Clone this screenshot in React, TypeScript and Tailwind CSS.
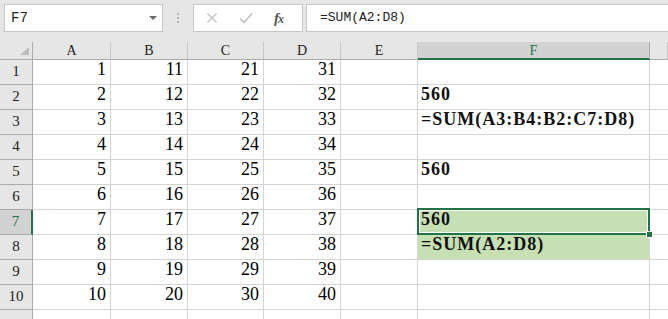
import React from 'react';

const COLS = ['A', 'B', 'C', 'D', 'E', 'F', ''];
const ROWS = [1, 2, 3, 4, 5, 6, 7, 8, 9, 10, 11];

const F_COL: Record<number, string> = {
  2: '560',
  3: '=SUM(A3:B4:B2:C7:D8)',
  5: '560',
  7: '560',
  8: '=SUM(A2:D8)',
};

const mono = { fontFamily: '"Liberation Mono", monospace' };
const serif = { fontFamily: '"Liberation Serif", serif' };

const App: React.FC = () => {
  return (
    <div className="w-[668px] h-[319px] overflow-hidden bg-white select-none">
      {/* Formula bar */}
      <div className="h-[42px] bg-[#e6e6e6] flex items-start pt-[4px] pl-[4px]">
        <div className="w-[159px] h-[28px] bg-white border border-[#c6c6c6] flex items-center justify-between pl-[6px] pr-[5px]">
          <span className="text-[14px] text-[#222]" style={mono}>F7</span>
          <span className="w-0 h-0 border-l-[4px] border-r-[4px] border-t-[4px] border-l-transparent border-r-transparent border-t-[#6b6b6b]" />
        </div>
        <div className="w-[30px] h-[28px] flex flex-col items-center justify-center gap-[2px]">
          <span className="w-[2px] h-[2px] bg-[#b4b4b4]" />
          <span className="w-[2px] h-[2px] bg-[#b4b4b4]" />
          <span className="w-[2px] h-[2px] bg-[#b4b4b4]" />
        </div>
        <div className="w-[110px] h-[28px] bg-white border border-[#c6c6c6] flex items-center pl-[12px] gap-[21px]">
          <svg width="12" height="12" viewBox="0 0 12 12">
            <path d="M1.5 1.5 L10.5 10.5 M10.5 1.5 L1.5 10.5" stroke="#c2c2c2" strokeWidth="1.3" fill="none" />
          </svg>
          <svg width="14" height="12" viewBox="0 0 14 12">
            <path d="M1 6.5 L5 10.5 L13 1.5" stroke="#c2c2c2" strokeWidth="1.6" fill="none" />
          </svg>
          <span className="text-[15px] leading-none italic font-bold text-[#555] tracking-[-1px]" style={serif}>
            f<span className="text-[12px]">x</span>
          </span>
        </div>
        <div className="flex-1 h-[28px] ml-[3px] bg-white border-y border-l border-[#c6c6c6] flex items-center pl-[13px]">
          <span className="text-[13px] text-[#222]" style={mono}>=SUM(A2:D8)</span>
        </div>
      </div>

      {/* Sheet grid */}
      <div className="grid grid-cols-[33px_78px_77px_76px_77px_77px_232px_1fr]">
        {/* Header row */}
        <div className="h-[18px] bg-[#e6e6e6] border-r border-b border-[#ababab] relative">
          <svg className="absolute right-[3px] bottom-[4px]" width="9" height="8" viewBox="0 0 9 8">
            <path d="M9 0 L9 8 L0 8 Z" fill="#bcbcbc" />
          </svg>
        </div>
        {COLS.map((c, i) => (
          <div
            key={c + i}
            className={`h-[18px] flex items-center justify-center text-[14px] border-r ${
              c === 'F'
                ? 'bg-[#d2d2d2] text-[#217346] border-b-2 border-b-[#217346] border-r-[#ababab]'
                : 'bg-[#e6e6e6] text-[#222] border-b border-b-[#ababab] border-r-[#c6c6c6]'
            }`}
            style={serif}
          >
            {c}
          </div>
        ))}

        {/* Body rows */}
        {ROWS.map(r => (
          <React.Fragment key={r}>
            <div
              className={`h-[25px] flex items-end justify-center pb-[2px] text-[15px] border-b ${
                r === 7
                  ? 'bg-[#d2d2d2] text-[#217346] border-r-2 border-r-[#217346] border-b-[#ababab]'
                  : 'bg-[#e6e6e6] text-[#222] border-r border-r-[#ababab] border-b-[#ababab]'
              }`}
              style={serif}
            >
              {r <= 10 ? r : ''}
            </div>
            {[0, 1, 2, 3].map(ci => (
              <div
                key={ci}
                className="h-[25px] flex items-end justify-end pr-[4px] pb-[1px] text-[18px] text-black border-r border-b border-[#d4d4d4]"
                style={serif}
              >
                {r <= 10 ? r + ci * 10 : ''}
              </div>
            ))}
            <div className="h-[25px] border-r border-b border-[#d4d4d4]" />
            <div
              className={`h-[25px] relative flex items-end pl-[3px] pb-[1px] text-[18px] font-bold tracking-[1px] text-[#111] border-r border-b border-[#d4d4d4] ${
                r === 7 || r === 8 ? 'bg-[#c6e0b4]' : ''
              }`}
              style={serif}
            >
              {F_COL[r] || ''}
              {r === 7 && (
                <>
                  <div className="absolute top-[-2px] left-[-1px] right-[-1px] bottom-[-1px] border-2 border-[#217346] z-10">
                    <div className="absolute inset-0 border border-white" />
                  </div>
                  <div className="absolute right-[-4px] bottom-[-4px] w-[7px] h-[7px] bg-[#217346] border border-white z-20" />
                </>
              )}
            </div>
            <div className="h-[25px] border-b border-[#d4d4d4]" />
          </React.Fragment>
        ))}
      </div>
    </div>
  );
};

export default App;
